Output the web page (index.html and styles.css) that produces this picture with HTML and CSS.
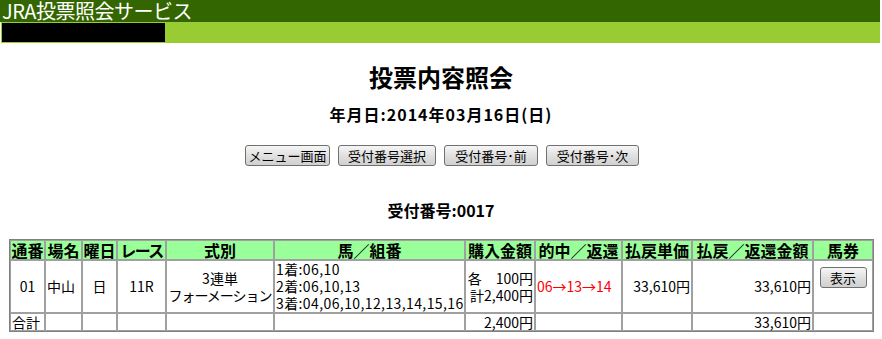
FILE: index.html
```html
<!DOCTYPE html>
<html lang="ja">
<head>
  <meta charset="UTF-8">
  <title>JRA投票照会サービス</title>
  <link rel="stylesheet" href="styles.css">
</head>
<body>
  <div class="header">
    <div class="title-bar">JRA投票照会サービス</div>
    <div class="sub-bar"><div class="user-box"></div></div>
  </div>

  <h1 class="page-title">投票内容照会</h1>
  <p class="date-line">年月日:2014年03月16日(日)</p>

  <div class="nav-buttons">
    <button class="btn btn-menu">メニュー画面</button>
    <button class="btn btn-select">受付番号選択</button>
    <button class="btn btn-prev">受付番号･前</button>
    <button class="btn btn-next">受付番号･次</button>
  </div>

  <p class="receipt-no">受付番号:0017</p>

  <table class="result">
    <tr>
      <th class="c1">通番</th>
      <th class="c2">場名</th>
      <th class="c3">曜日</th>
      <th class="c4">レース</th>
      <th class="c5">式別</th>
      <th class="c6">馬／組番</th>
      <th class="c7">購入金額</th>
      <th class="c8">的中／返還</th>
      <th class="c9">払戻単価</th>
      <th class="c10">払戻／返還金額</th>
      <th class="c11">馬券</th>
    </tr>
    <tr class="data-row">
      <td class="center">01</td>
      <td>中山</td>
      <td class="center">日</td>
      <td class="center">11R</td>
      <td class="center kind">3連単<br><span class="narrow">フォーメーション</span></td>
      <td class="horses">1着:06,10<br>2着:06,10,13<br>3着:04,06,10,12,13,14,15,16</td>
      <td class="right">各　100円<br>計2,400円</td>
      <td class="hit">06→13→14</td>
      <td class="right">33,610円</td>
      <td class="right">33,610円</td>
      <td class="ticket"><button class="btn btn-show">表示</button></td>
    </tr>
    <tr class="total-row">
      <td>合計</td>
      <td></td>
      <td></td>
      <td></td>
      <td></td>
      <td></td>
      <td class="right">2,400円</td>
      <td></td>
      <td></td>
      <td class="right">33,610円</td>
      <td></td>
    </tr>
  </table>
</body>
</html>
```

FILE: styles.css
```css
/* 全体 */
body {
  margin: 0;
  font-family: "Noto Sans CJK JP", sans-serif;
  color: #000;
  background: #fff;
}

/* ヘッダー */
.header {
  width: 880px;
}
.title-bar {
  height: 22px;
  line-height: 22px;
  padding-left: 2px;
  background: #336600;
  color: #fff;
  font-size: 20px;
  letter-spacing: -0.5px;
}
.sub-bar {
  height: 19px;
  padding: 1px 0 1px 1px;
  margin-left: 1px;
  background: #99cc33;
}
.user-box {
  width: 163px;
  height: 19px;
  background: #000;
}

/* 見出し */
.page-title {
  margin: 19px 0 0;
  text-align: center;
  font-size: 24px;
  line-height: 30px;
  font-weight: bold;
}
.date-line {
  margin: 12px 0 0;
  text-align: center;
  font-size: 16px;
  line-height: 20px;
  font-weight: bold;
  letter-spacing: 1px;
}
.receipt-no {
  margin: 34px 0 0;
  text-align: center;
  font-size: 16px;
  line-height: 20px;
  font-weight: bold;
}

/* ボタン */
.nav-buttons {
  display: flex;
  justify-content: center;
  gap: 8px;
  margin-top: 21px;
  padding-left: 2px;
}
.btn {
  height: 21px;
  padding: 0;
  white-space: nowrap;
  font-family: "Noto Sans CJK JP", sans-serif;
  font-size: 13px;
  line-height: 19px;
  color: #000;
  border: 1px solid #707070;
  border-radius: 3px;
  background: linear-gradient(#f6f6f6, #e0e0e0 50%, #d0d0d0);
}
.btn-menu { width: 85px; }
.btn-select { width: 98px; }
.btn-prev { width: 94px; }
.btn-next { width: 93px; }

/* 照会テーブル */
.result {
  margin: 19px 0 0 9px;
  width: 865px;
  table-layout: fixed;
  border-collapse: separate;
  border-spacing: 0;
  border: 1px solid #808080;
  font-size: 14px;
  line-height: 17px;
}
.result th,
.result td {
  box-sizing: border-box;
  border: 1px solid #a0a0a0;
  padding: 0 1px;
  white-space: nowrap;
}
.result th {
  height: 20px;
  padding: 0;
  background: #99ff99;
  font-size: 16px;
  line-height: 18px;
  font-weight: bold;
  text-align: center;
}
.c1 { width: 35px; }
.c2 { width: 37px; }
.c3 { width: 35px; }
.c4 { width: 49px; letter-spacing: -1.5px; }
.c5 { width: 108px; }
.c6 { width: 191px; }
.c7 { width: 70px; }
.c8 { width: 87px; }
.c9 { width: 70px; }
.c10 { width: 121px; }
.c11 { width: 60px; }

.data-row td {
  height: 53px;
}
.total-row td {
  height: 18px;
  line-height: 16px;
}
.center { text-align: center; }
.right { text-align: right; }
.narrow { letter-spacing: -1px; }
.horses { letter-spacing: 0.4px; }
.hit {
  color: #ff0000;
  padding-left: 2px;
}
.ticket {
  text-align: center;
  vertical-align: top;
  padding-top: 6px !important;
}
.btn-show {
  width: 47px;
  height: 21px;
  font-size: 13px;
}
```
